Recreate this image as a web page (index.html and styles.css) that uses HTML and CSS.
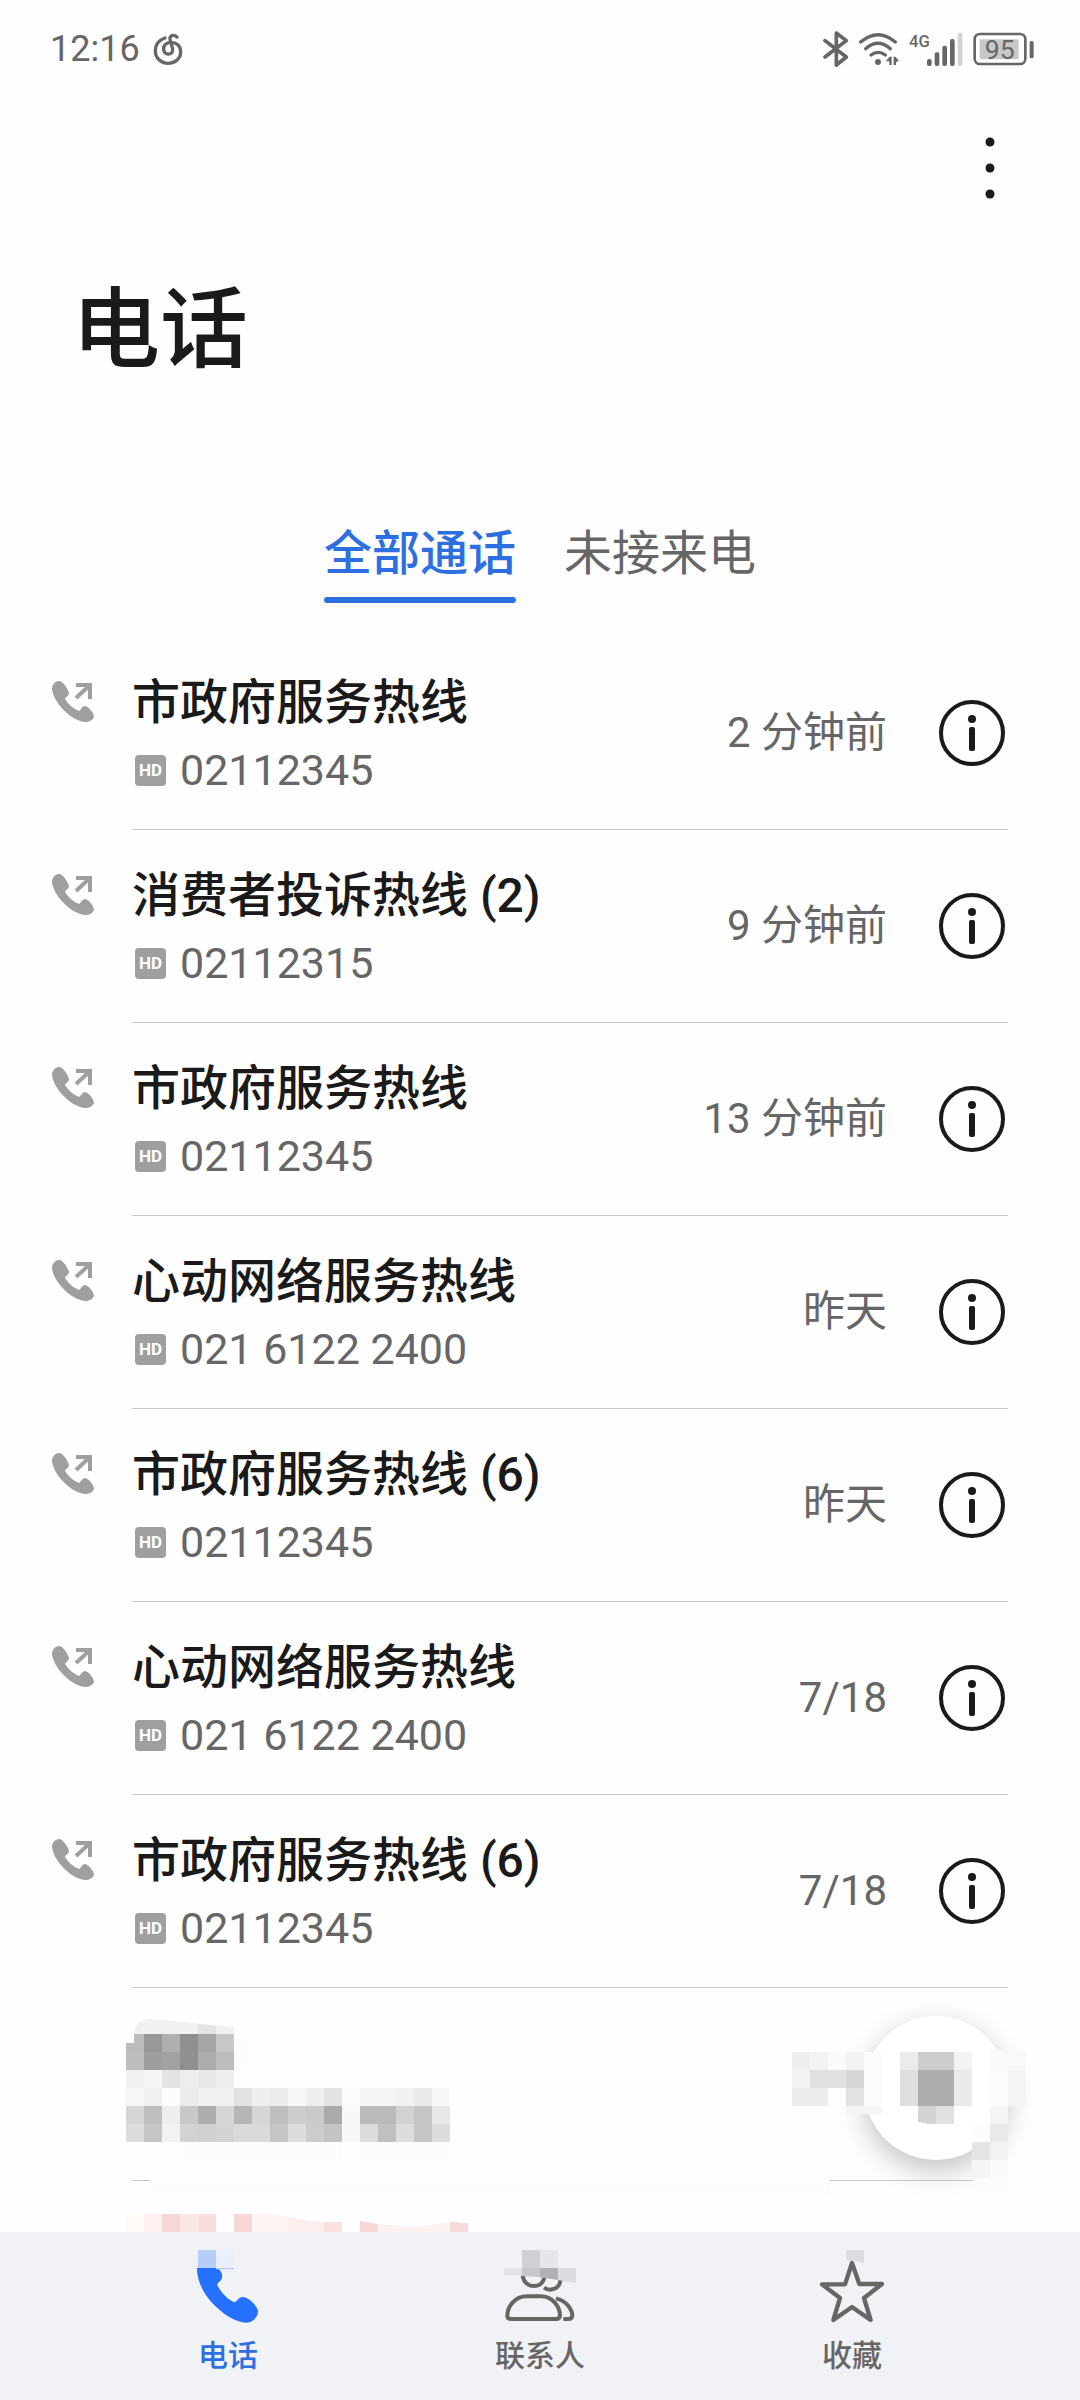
FILE: index.html
```html
<!DOCTYPE html>
<html lang="zh-CN">
<head>
    <meta charset="UTF-8">
    <meta name="viewport" content="width=device-width, initial-scale=1.0">
    <title>电话</title>
    <link rel="stylesheet" href="styles.css">
</head>
<body>

    <!-- Icônes partagées -->
    <svg class="sprite" aria-hidden="true">
        <symbol id="outgoing" viewBox="0 0 42 42">
            <path fill="#9f9f9f" d="M7 0C11 0 16 8 17 12C17 15 13 16 13 18C16 23 22 28 27 30C29 29 30 25 33 25C37 26 42 32 42 36C41 39 37 41 33 41C17 39 1 20 0 8C0 4 3 0 7 0Z"/>
            <path fill="none" stroke="#9f9f9f" stroke-width="4" d="M24 4H38V18M38 4L24 17"/>
        </symbol>
        <symbol id="info" viewBox="0 0 66 66">
            <circle cx="33" cy="33" r="31" fill="none" stroke="#1a1a1a" stroke-width="4"/>
            <circle cx="33" cy="19" r="4" fill="#1a1a1a"/>
            <rect x="30" y="27" width="6" height="24" rx="2" fill="#1a1a1a"/>
        </symbol>
    </svg>

    <div class="status-bar">
        <div class="status-left">
            <span class="clock">12:16</span>
            <svg class="music" viewBox="455 100 96 105">
                <path fill="none" stroke="#666" stroke-width="10" stroke-linecap="round" d="M494 118C472 126 465 142 465 156C465 178 482 194 503 194C525 194 541 179 541 159C541 140 526 130 510 131C496 132 488 142 490 154C493 171 518 170 517 152C516 140 507 128 509 117C512 107 524 109 530 115"/>
            </svg>
        </div>
        <div class="status-right">
            <svg class="bluetooth" viewBox="128 93 78 108">
                <path fill="none" stroke="#666" stroke-width="11" stroke-linejoin="round" stroke-linecap="round" d="M134 122L198 171L168 195V99L198 122L134 171"/>
            </svg>
            <svg class="wifi" viewBox="238 93 120 108">
                <g fill="none" stroke="#666" stroke-width="10" stroke-linecap="round">
                    <path d="M243 126Q295 82 347 126"/>
                    <path d="M258 146Q295 114 332 146"/>
                    <path d="M274 165Q295 149 317 165"/>
                </g>
                <circle cx="295" cy="186" r="9" fill="#666"/>
                <path fill="#666" d="M318 184L330 170H336V195H329V184ZM342 170H347L358 183L349 186V195H342Z"/>
            </svg>
            <svg class="signal" viewBox="384 93 162 108">
                <text x="384" y="142" class="network">4G</text>
                <g fill="#666">
                    <rect x="438" y="177" width="14" height="21" rx="6"/>
                    <rect x="461" y="157" width="14" height="41" rx="6"/>
                    <rect x="484" y="137" width="14" height="61" rx="6"/>
                    <rect x="507" y="117" width="14" height="81" rx="6"/>
                    <rect x="530" y="98" width="14" height="100" rx="6" fill="#d2d2d2"/>
                </g>
            </svg>
            <svg class="battery" viewBox="580 93 183 108">
                <rect x="585" y="102" width="152" height="90" rx="16" fill="none" stroke="#666" stroke-width="8"/>
                <rect x="600" y="118" width="117" height="60" rx="4" fill="#c8c8c8"/>
                <rect x="750" y="123" width="12" height="52" rx="5" fill="#666"/>
                <text x="660" y="176" text-anchor="middle" class="level">95</text>
            </svg>
        </div>
    </div>

    <header>
        <div class="toolbar">
            <button class="menu" aria-label="更多">
                <svg viewBox="0 0 10 62" fill="#1a1a1a">
                    <circle cx="5" cy="5" r="4.5"/>
                    <circle cx="5" cy="31" r="4.5"/>
                    <circle cx="5" cy="57" r="4.5"/>
                </svg>
            </button>
        </div>
        <h1>电话</h1>
    </header>

    <div class="tabs">
        <button class="tab active">全部通话</button>
        <button class="tab">未接来电</button>
    </div>

    <ul class="calls">
        <li>
            <svg class="outgoing"><use href="#outgoing"/></svg>
            <div class="call">
                <div class="who">
                    <div class="name">市政府服务热线</div>
                    <div class="number"><span class="hd">HD</span>02112345</div>
                </div>
                <span class="when">2 分钟前</span>
                <button class="info" aria-label="详情"><svg><use href="#info"/></svg></button>
            </div>
        </li>
        <li>
            <svg class="outgoing"><use href="#outgoing"/></svg>
            <div class="call">
                <div class="who">
                    <div class="name">消费者投诉热线 (2)</div>
                    <div class="number"><span class="hd">HD</span>02112315</div>
                </div>
                <span class="when">9 分钟前</span>
                <button class="info" aria-label="详情"><svg><use href="#info"/></svg></button>
            </div>
        </li>
        <li>
            <svg class="outgoing"><use href="#outgoing"/></svg>
            <div class="call">
                <div class="who">
                    <div class="name">市政府服务热线</div>
                    <div class="number"><span class="hd">HD</span>02112345</div>
                </div>
                <span class="when">13 分钟前</span>
                <button class="info" aria-label="详情"><svg><use href="#info"/></svg></button>
            </div>
        </li>
        <li>
            <svg class="outgoing"><use href="#outgoing"/></svg>
            <div class="call">
                <div class="who">
                    <div class="name">心动网络服务热线</div>
                    <div class="number"><span class="hd">HD</span>021 6122 2400</div>
                </div>
                <span class="when">昨天</span>
                <button class="info" aria-label="详情"><svg><use href="#info"/></svg></button>
            </div>
        </li>
        <li>
            <svg class="outgoing"><use href="#outgoing"/></svg>
            <div class="call">
                <div class="who">
                    <div class="name">市政府服务热线 (6)</div>
                    <div class="number"><span class="hd">HD</span>02112345</div>
                </div>
                <span class="when">昨天</span>
                <button class="info" aria-label="详情"><svg><use href="#info"/></svg></button>
            </div>
        </li>
        <li>
            <svg class="outgoing"><use href="#outgoing"/></svg>
            <div class="call">
                <div class="who">
                    <div class="name">心动网络服务热线</div>
                    <div class="number"><span class="hd">HD</span>021 6122 2400</div>
                </div>
                <span class="when">7/18</span>
                <button class="info" aria-label="详情"><svg><use href="#info"/></svg></button>
            </div>
        </li>
        <li>
            <svg class="outgoing"><use href="#outgoing"/></svg>
            <div class="call">
                <div class="who">
                    <div class="name">市政府服务热线 (6)</div>
                    <div class="number"><span class="hd">HD</span>02112345</div>
                </div>
                <span class="when">7/18</span>
                <button class="info" aria-label="详情"><svg><use href="#info"/></svg></button>
            </div>
        </li>
    </ul>

    <!-- Appels masqués par une mosaïque -->
    <div class="hidden-calls">
        <div class="hidden-row"></div>
        <button class="dial" aria-label="拨号"></button>
        <svg class="mosaic" viewBox="0 0 1080 244" shape-rendering="crispEdges" aria-hidden="true">
            <!-- nom -->
            <path fill="#f1f1f1" d="M134 46Q136 31 150 31L234 39V46Z"/>
            <path fill="#e4e4e4" d="M198 36L216 38V46H198Z"/>
            <path fill="#bcbcbc" d="M126 55H134V46H144V64H126Z"/>
            <rect x="144" y="46" width="18" height="18" fill="#989898"/>
            <rect x="162" y="46" width="18" height="18" fill="#afafaf"/>
            <rect x="180" y="46" width="18" height="36" fill="#8f8f8f"/>
            <rect x="198" y="46" width="18" height="18" fill="#a6a6a6"/>
            <rect x="216" y="46" width="18" height="18" fill="#c8c8c8"/>
            <rect x="126" y="64" width="18" height="18" fill="#bdbdbd"/>
            <rect x="144" y="64" width="18" height="18" fill="#9e9e9e"/>
            <rect x="162" y="64" width="18" height="18" fill="#a2a2a2"/>
            <rect x="198" y="64" width="18" height="18" fill="#acacac"/>
            <rect x="216" y="64" width="18" height="18" fill="#bcbcbc"/>
            <rect x="234" y="46" width="18" height="36" fill="#fcfcfc"/>
            <rect x="126" y="82" width="18" height="18" fill="#f1f1f1"/>
            <rect x="144" y="82" width="18" height="18" fill="#f5f5f5"/>
            <rect x="162" y="82" width="18" height="18" fill="#e3e3e3"/>
            <rect x="180" y="82" width="18" height="18" fill="#ededed"/>
            <rect x="198" y="82" width="18" height="18" fill="#e8e8e8"/>
            <rect x="216" y="82" width="18" height="18" fill="#efefef"/>
            <!-- numéro -->
            <rect x="126" y="100" width="18" height="18" fill="#f6f6f6"/>
            <rect x="144" y="100" width="18" height="18" fill="#f1f1f1"/>
            <rect x="162" y="100" width="18" height="18" fill="#fcfcfc"/>
            <rect x="180" y="100" width="18" height="18" fill="#ebebeb"/>
            <rect x="198" y="100" width="36" height="18" fill="#f1f1f1"/>
            <rect x="234" y="100" width="18" height="18" fill="#e2e2e2"/>
            <rect x="252" y="100" width="18" height="18" fill="#efefef"/>
            <rect x="270" y="100" width="18" height="18" fill="#ececec"/>
            <rect x="288" y="100" width="18" height="18" fill="#f8f8f8"/>
            <rect x="306" y="100" width="18" height="18" fill="#efefef"/>
            <rect x="324" y="100" width="18" height="18" fill="#e3e3e3"/>
            <rect x="342" y="100" width="18" height="18" fill="#fbfbfb"/>
            <rect x="360" y="100" width="36" height="18" fill="#f4f4f4"/>
            <rect x="396" y="100" width="18" height="18" fill="#f1f1f1"/>
            <rect x="414" y="100" width="18" height="18" fill="#eaeaea"/>
            <rect x="432" y="100" width="18" height="18" fill="#f8f8f8"/>
            <rect x="126" y="118" width="18" height="18" fill="#d6d6d6"/>
            <rect x="144" y="118" width="18" height="18" fill="#bebebe"/>
            <rect x="162" y="118" width="18" height="18" fill="#eeeeee"/>
            <rect x="180" y="118" width="18" height="18" fill="#c8c8c8"/>
            <rect x="198" y="118" width="18" height="18" fill="#aeaeae"/>
            <rect x="216" y="118" width="18" height="18" fill="#d6d6d6"/>
            <rect x="234" y="118" width="18" height="18" fill="#b6b6b6"/>
            <rect x="252" y="118" width="18" height="18" fill="#d6d6d6"/>
            <rect x="270" y="118" width="18" height="18" fill="#bebebe"/>
            <rect x="288" y="118" width="18" height="18" fill="#cdcdcd"/>
            <rect x="306" y="118" width="18" height="18" fill="#cacaca"/>
            <rect x="324" y="118" width="18" height="18" fill="#aaaaaa"/>
            <rect x="342" y="118" width="18" height="36" fill="#f8f8f8"/>
            <rect x="360" y="118" width="36" height="18" fill="#bababa"/>
            <rect x="396" y="118" width="18" height="18" fill="#d2d2d2"/>
            <rect x="414" y="118" width="18" height="36" fill="#c5c5c5"/>
            <rect x="432" y="118" width="18" height="18" fill="#e7e7e7"/>
            <rect x="126" y="136" width="18" height="18" fill="#dcdcdc"/>
            <rect x="144" y="136" width="18" height="18" fill="#c6c6c6"/>
            <rect x="162" y="136" width="18" height="18" fill="#f2f2f2"/>
            <rect x="180" y="136" width="18" height="18" fill="#d3d3d3"/>
            <rect x="198" y="136" width="18" height="18" fill="#d0d0d0"/>
            <rect x="216" y="136" width="18" height="18" fill="#d4d4d4"/>
            <rect x="234" y="136" width="36" height="18" fill="#dadada"/>
            <rect x="270" y="136" width="18" height="18" fill="#c5c5c5"/>
            <rect x="288" y="136" width="18" height="18" fill="#dddddd"/>
            <rect x="306" y="136" width="18" height="18" fill="#cccccc"/>
            <rect x="324" y="136" width="18" height="18" fill="#c4c4c4"/>
            <rect x="360" y="136" width="18" height="18" fill="#dcdcdc"/>
            <rect x="378" y="136" width="18" height="18" fill="#c0c0c0"/>
            <rect x="396" y="136" width="18" height="18" fill="#dddddd"/>
            <rect x="432" y="136" width="18" height="18" fill="#dddddd"/>
            <rect x="180" y="154" width="162" height="18" fill="#fcfcfc"/>
            <rect x="360" y="154" width="90" height="18" fill="#fcfcfc"/>
            <!-- date et bouton -->
            <rect x="792" y="64" width="18" height="18" fill="#eeeeee"/>
            <rect x="810" y="64" width="18" height="18" fill="#f3f3f3"/>
            <rect x="828" y="64" width="18" height="18" fill="#fafafa"/>
            <rect x="846" y="64" width="18" height="18" fill="#f3f3f3"/>
            <rect x="864" y="64" width="18" height="54" fill="#fbfbfb"/>
            <rect x="792" y="82" width="18" height="18" fill="#f2f2f2"/>
            <rect x="810" y="82" width="36" height="18" fill="#e0e0e0"/>
            <rect x="846" y="82" width="18" height="18" fill="#d6d6d6"/>
            <rect x="792" y="100" width="36" height="18" fill="#ebebeb"/>
            <rect x="828" y="100" width="18" height="18" fill="#fdfdfd"/>
            <rect x="846" y="100" width="18" height="18" fill="#e2e2e2"/>
            <rect x="846" y="118" width="36" height="8" fill="#f5f5f5"/>
            <rect x="900" y="64" width="18" height="18" fill="#ebebeb"/>
            <rect x="918" y="64" width="36" height="18" fill="#cdcdcd"/>
            <rect x="954" y="64" width="18" height="18" fill="#f3f3f3"/>
            <rect x="900" y="82" width="18" height="36" fill="#dfdfdf"/>
            <rect x="918" y="82" width="36" height="36" fill="#adadad"/>
            <rect x="954" y="82" width="18" height="36" fill="#eaeaea"/>
            <path fill="#d3d3d3" d="M918 118H936V136Q926 136 918 134Z"/>
            <rect x="936" y="118" width="18" height="18" fill="#e1e1e1"/>
            <rect x="990" y="62" width="36" height="20" fill="#f9f9f9"/>
            <rect x="990" y="82" width="18" height="36" fill="#fcfcfc"/>
            <rect x="1008" y="82" width="18" height="36" fill="#f5f5f5"/>
            <rect x="990" y="118" width="18" height="18" fill="#f5f5f5"/>
            <rect x="972" y="136" width="18" height="18" fill="#fcfcfc"/>
            <rect x="990" y="136" width="18" height="18" fill="#e9e9e9"/>
            <rect x="972" y="154" width="18" height="18" fill="#e5e5e5"/>
            <rect x="990" y="154" width="18" height="18" fill="#f2f2f2"/>
            <rect x="972" y="172" width="18" height="18" fill="#f5f5f5"/>
            <rect x="990" y="172" width="18" height="18" fill="#fafafa"/>
            <!-- séparateur effacé -->
            <rect x="150" y="190" width="680" height="18" fill="#fcfcfc"/>
            <rect x="973" y="190" width="36" height="18" fill="#fcfcfc"/>
            <!-- appel manqué -->
            <rect x="126" y="226" width="18" height="18" fill="#fefaf8"/>
            <rect x="144" y="226" width="18" height="18" fill="#fcf1ef"/>
            <rect x="162" y="226" width="18" height="18" fill="#f6d7d7"/>
            <rect x="180" y="226" width="18" height="18" fill="#f9e7e6"/>
            <rect x="198" y="226" width="18" height="18" fill="#f6dfde"/>
            <rect x="234" y="226" width="18" height="18" fill="#f6d6d6"/>
            <path fill="#fdf6f5" d="M252 226H274L288 229V244H252Z"/>
            <path fill="#fbeeed" d="M288 229L324 235V244H288Z"/>
            <rect x="324" y="234" width="18" height="10" fill="#f8e1e0"/>
            <path fill="#f6d8d8" d="M360 233L378 236V244H360Z"/>
            <path fill="#fcf2f1" d="M378 236L414 239L450 234V244H378Z"/>
            <path fill="#f6dada" d="M450 234L468 235V244H450Z"/>
        </svg>
    </div>

    <nav>
        <a href="#phone" class="active">
            <svg viewBox="276 150 216 228">
                <path fill="#2470ff" d="M291 204H352C364 212 368 222 366 234C364 244 350 248 352 256C362 276 384 300 404 307C412 302 418 290 430 291C448 294 468 314 474 332C476 350 458 367 440 368C400 368 350 330 318 286C302 262 290 230 291 204Z"/>
                <rect x="294" y="150" width="54" height="54" fill="#b6cdf6"/>
                <rect x="348" y="150" width="54" height="54" fill="#ebeffa"/>
                <rect x="348" y="204" width="54" height="4" fill="#b6cdf6"/>
            </svg>
            <span>电话</span>
        </a>
        <a href="#contacts">
            <svg viewBox="1212 150 216 228">
                <g fill="none" stroke="#666" stroke-width="12">
                    <path d="M1268 226C1272 268 1328 268 1333 232"/>
                    <path d="M1332 263C1352 276 1380 266 1381 240"/>
                    <path d="M1222 348C1222 320 1244 289 1280 289H1322C1358 289 1380 320 1380 348Q1378 357 1369 357H1233Q1222 357 1222 348Z"/>
                    <path d="M1368 295C1400 302 1417 330 1417 348Q1415 357 1405 357H1390"/>
                </g>
                <rect x="1212" y="204" width="54" height="22" fill="#e3e3e7"/>
                <rect x="1266" y="150" width="54" height="54" fill="#cfd0d3"/>
                <path fill="#c6c7ca" d="M1266 204H1320V232L1266 228Z"/>
                <rect x="1320" y="150" width="54" height="54" fill="#e5e6ea"/>
                <path fill="#b0b1b4" d="M1320 204H1374V240L1320 232Z"/>
                <path fill="#dcdde1" d="M1374 204H1428V250L1374 240Z"/>
            </svg>
            <span>联系人</span>
        </a>
        <a href="#favorites">
            <svg viewBox="648 150 216 228">
                <path fill="#dbdce0" d="M738 150H792V188L738 180Z"/>
                <path fill="#f1f2f6" stroke="#666" stroke-width="13" stroke-linejoin="round" d="M756 189L778 252H846L792 294L812 360L756 321L700 360L720 294L666 253H735Z"/>
            </svg>
            <span>收藏</span>
        </a>
    </nav>

</body>
</html>
```

FILE: styles.css
```css
* {
    box-sizing: border-box;
}

body {
    font-family: Roboto, "Noto Sans CJK SC", sans-serif;
    margin: 0;
    min-height: 100vh;
    display: flex;
    flex-direction: column;
    background: #fefefe;
    color: #1a1a1a;
}

button {
    font-family: inherit;
    background: none;
    border: none;
    padding: 0;
    cursor: pointer;
}

svg {
    display: block;
    flex-shrink: 0;
}

.sprite {
    position: absolute;
    width: 0;
    height: 0;
}

.status-bar {
    display: flex;
    justify-content: space-between;
    align-items: center;
    height: 98px;
    padding: 0 46px 0 50px;
    color: #666;
}

.status-left, .status-right {
    display: flex;
    align-items: center;
    gap: 10px;
}

.status-left {
    gap: 12px;
}

.clock {
    font-size: 36px;
}

.music {
    width: 32px;
    height: 35px;
}

.bluetooth {
    width: 26px;
    height: 36px;
}

.wifi {
    width: 40px;
    height: 36px;
}

.signal {
    width: 54px;
    height: 36px;
}

.battery {
    width: 61px;
    height: 36px;
}

.network {
    font-size: 50px;
    font-weight: 500;
    fill: #666;
}

.level {
    font-size: 80px;
    fill: #666;
}

.toolbar {
    display: flex;
    justify-content: flex-end;
    align-items: center;
    height: 140px;
    padding: 0 73px;
}

.menu {
    padding: 12px;
}

    .menu svg {
        width: 10px;
        height: 62px;
    }

h1 {
    margin: 0;
    padding: 4px 72px 0;
    font-size: 88px;
    font-weight: 500;
    line-height: 176px;
}

.tabs {
    display: flex;
    justify-content: center;
    gap: 48px;
    margin: 98px 0 34px;
}

.tab {
    font-size: 48px;
    line-height: 76px;
    color: #666;
    padding-bottom: 11px;
}

    .tab.active {
        position: relative;
        color: #2d6fe0;
        font-weight: 500;
    }

        .tab.active::after {
            content: "";
            position: absolute;
            left: 0;
            right: 0;
            bottom: 0;
            height: 6px;
            border-radius: 3px;
            background: #2d6fe0;
        }

.calls {
    list-style: none;
    margin: 0;
    padding: 0 72px 0 52px;
}

    .calls li {
        display: flex;
        gap: 38px;
    }

.outgoing {
    width: 42px;
    height: 42px;
    margin-top: 44px;
}

.call {
    flex: 1;
    display: flex;
    align-items: center;
    border-bottom: 1px solid #c8c8c8;
}

.who {
    flex: 1;
    padding: 31px 0 27px;
}

.name {
    font-size: 48px;
    font-weight: 500;
    line-height: 70px;
}

.number {
    display: flex;
    align-items: center;
    gap: 14px;
    font-size: 43px;
    line-height: 64px;
    color: #666;
    padding-left: 3px;
}

.hd {
    width: 31px;
    border-radius: 4px;
    background: #9f9f9f;
    color: white;
    font-size: 17px;
    font-weight: bold;
    line-height: 31px;
    text-align: center;
}

.when {
    font-size: 42px;
    line-height: 64px;
    color: #666;
}

.info {
    margin: 0 3px 0 52px;
}

    .info svg {
        width: 66px;
        height: 66px;
    }

.hidden-calls {
    position: relative;
    flex: 1;
    min-height: 244px;
}

.hidden-row {
    height: 193px;
    margin: 0 72px 0 132px;
    border-bottom: 1px solid #c8c8c8;
}

.dial {
    position: absolute;
    right: 72px;
    bottom: 72px;
    width: 144px;
    height: 144px;
    border-radius: 50%;
    background: white;
    box-shadow: 0 10px 28px rgba(0, 0, 0, 0.24);
}

.mosaic {
    position: absolute;
    top: 0;
    left: 0;
    width: 100%;
    pointer-events: none;
}

nav {
    display: flex;
    height: 168px;
    padding: 18px 72px 0;
    background: #f1f2f6;
}

    nav a {
        flex: 1;
        display: flex;
        flex-direction: column;
        align-items: center;
        gap: 10px;
        font-size: 30px;
        font-weight: 500;
        line-height: 40px;
        color: #666;
        text-decoration: none;
    }

        nav a.active {
            color: #2d6fe0;
        }

    nav svg {
        width: 72px;
        height: 76px;
    }
```
